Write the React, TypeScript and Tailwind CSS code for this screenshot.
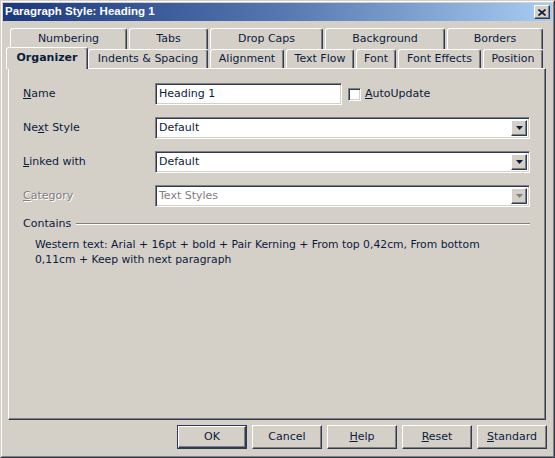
import React from 'react';

const raised =
  "border border-t-white border-l-white border-r-[#2f3a56] border-b-[#2f3a56] shadow-[inset_-1px_-1px_0_#808080]";
const sunken =
  "border border-t-[#808080] border-l-[#808080] border-r-white border-b-white shadow-[inset_1px_1px_0_#2f3a56,inset_-1px_-1px_0_#d4d0c8]";

const Tab = ({ label, w, active }: { label: string; w: string; active?: boolean }) => (
  <div
    className={`${w} flex items-center justify-center rounded-t-[3px] border-t border-l border-r border-t-white border-l-white border-r-[#2f3a56] shadow-[inset_-1px_0_0_#808080] bg-[#d4d0c8] ${
      active ? "relative z-10 -mx-[2px] -mt-[2px] -mb-[1px] font-bold" : ""
    }`}
  >
    {label}
  </div>
);

const Arrow = ({ color }: { color: string }) => (
  <svg width="7" height="4" viewBox="0 0 7 4">
    <path d="M0 0h7L3.5 4z" fill={color} />
  </svg>
);

const Combo = ({ value, disabled }: { value: string; disabled?: boolean }) => (
  <div className={`h-[22px] w-full flex bg-white p-[2px] ${sunken}`}>
    <div className={`flex-1 flex items-center pl-[1px] ${disabled ? "text-[#808080]" : ""}`}>{value}</div>
    <div className={`w-[16px] h-full flex items-center justify-center bg-[#d4d0c8] ${raised}`}>
      <Arrow color={disabled ? "#808080" : "#0c1a3c"} />
    </div>
  </div>
);

const Btn = ({ children, def }: { children: React.ReactNode; def?: boolean }) =>
  def ? (
    <div className="w-[70px] h-[24px] border border-[#2f3a56]">
      <div className={`w-full h-full flex items-center justify-center ${raised}`}>{children}</div>
    </div>
  ) : (
    <div className={`w-[70px] h-[24px] flex items-center justify-center ${raised}`}>{children}</div>
  );

export default function App() {
  return (
    <div className="w-[555px] h-[458px] bg-[#d4d0c8] border border-t-[#d4d0c8] border-l-[#d4d0c8] border-r-[#2f3a56] border-b-[#2f3a56] text-[#0c1a3c] text-[11px] font-['DejaVu_Sans',sans-serif]">
      <div className="h-full border border-t-white border-l-white border-r-[#808080] border-b-[#808080] p-px flex flex-col">
        {/* title bar */}
        <div className="h-[18px] flex items-center justify-between bg-gradient-to-r from-[#1c3880] via-[#5576ae] to-[#a8ccf2] pl-[2px] pr-[2px]">
          <span className="text-white font-bold text-[11.5px] font-['Liberation_Sans',Arial,sans-serif]">
            Paragraph Style: Heading 1
          </span>
          <div className={`w-[16px] h-[14px] flex items-center justify-center bg-[#d4d0c8] ${raised}`}>
            <svg width="8" height="7" viewBox="0 0 8 7">
              <path d="M0.5 0.5L7.5 6.5M7.5 0.5L0.5 6.5" stroke="#0c1a3c" strokeWidth="1.6" />
            </svg>
          </div>
        </div>

        {/* tabs */}
        <div className="mt-[7px] ml-[7px] h-[21px] flex gap-[2px]">
          <Tab label="Numbering" w="w-[117px]" />
          <Tab label="Tabs" w="w-[79px]" />
          <Tab label="Drop Caps" w="w-[113px]" />
          <Tab label="Background" w="w-[120px]" />
          <Tab label="Borders" w="w-[96px]" />
        </div>
        <div className="ml-[5px] h-[19px] flex gap-[2px]">
          <Tab label="Organizer" w="w-[82px]" active />
          <Tab label="Indents & Spacing" w="w-[120px]" />
          <Tab label="Alignment" w="w-[74px]" />
          <Tab label="Text Flow" w="w-[68px]" />
          <Tab label="Font" w="w-[40px]" />
          <Tab label="Font Effects" w="w-[83px]" />
          <Tab label="Position" w="w-[60px]" />
        </div>

        {/* page */}
        <div className="ml-[5px] w-[538px] h-[352px] border border-t-white border-l-white border-r-[#2f3a56] border-b-[#2f3a56] shadow-[inset_-1px_-1px_0_#808080] pt-[14px] pl-[14px] pr-[15px]">
          <div className="grid grid-cols-[132px_1fr] gap-y-[12px]">
            <div className="h-[22px] flex items-center">
              <span><u>N</u>ame</span>
            </div>
            <div className="h-[22px] flex items-center">
              <div className={`w-[187px] h-[22px] flex items-center bg-white pl-[3px] ${sunken}`}>Heading 1</div>
              <div className={`ml-[6px] w-[13px] h-[13px] bg-white ${sunken}`} />
              <span className="ml-[4px]"><u>A</u>utoUpdate</span>
            </div>

            <div className="h-[22px] flex items-center">
              <span>Ne<u>x</u>t Style</span>
            </div>
            <Combo value="Default" />

            <div className="h-[22px] flex items-center">
              <span><u>L</u>inked with</span>
            </div>
            <Combo value="Default" />

            <div className="h-[22px] flex items-center">
              <span className="text-[#808080] [text-shadow:1px_1px_0_#fff]"><u>C</u>ategory</span>
            </div>
            <Combo value="Text Styles" disabled />
          </div>

          <div className="mt-[10px] h-[14px] flex items-center">
            <span>Contains</span>
            <div className="flex-1 ml-[5px] h-[2px] border-t border-t-[#808080] border-b border-b-white" />
          </div>
          <p className="mt-[6px] pl-[12px] w-[472px] leading-[15px] text-[10.8px]">
            Western text: Arial + 16pt + bold + Pair Kerning + From top 0,42cm, From bottom 0,11cm + Keep with next paragraph
          </p>
        </div>

        {/* buttons */}
        <div className="mt-[5px] pr-[5px] flex justify-end gap-[5px]">
          <Btn def>OK</Btn>
          <Btn>Cancel</Btn>
          <Btn><span><u>H</u>elp</span></Btn>
          <Btn><span><u>R</u>eset</span></Btn>
          <Btn><span><u>S</u>tandard</span></Btn>
        </div>
      </div>
    </div>
  );
}
